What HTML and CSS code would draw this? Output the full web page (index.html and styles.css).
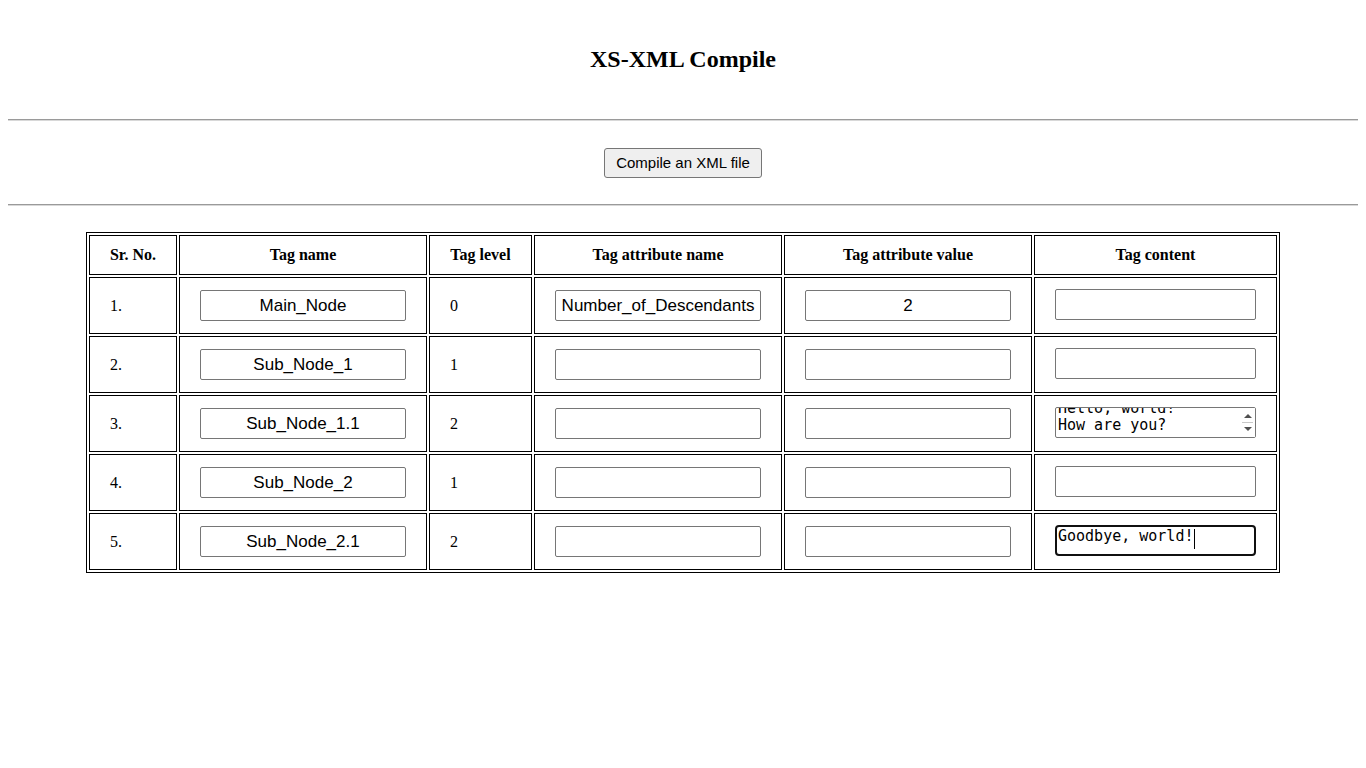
FILE: index.html
```html
<!DOCTYPE html>
<html lang="en">
<head>
<meta charset="utf-8">
<title>XS-XML Compile</title>
<link rel="stylesheet" href="styles.css">
</head>
<body>
<h2 class="title">XS-XML Compile</h2>
<hr class="rule">
<div class="actions">
  <button class="compile-btn" type="button">Compile an XML file</button>
</div>
<hr class="rule">
<table class="tags">
  <thead>
    <tr>
      <th class="c-sr">Sr. No.</th>
      <th class="c-name">Tag name</th>
      <th class="c-level">Tag level</th>
      <th class="c-attr">Tag attribute name</th>
      <th class="c-val">Tag attribute value</th>
      <th class="c-content">Tag content</th>
    </tr>
  </thead>
  <tbody>
    <tr>
      <td>1.</td>
      <td><input class="field" type="text" value="Main_Node"></td>
      <td>0</td>
      <td><input class="field" type="text" value="Number_of_Descendants"></td>
      <td><input class="field" type="text" value="2"></td>
      <td><div class="content-box"><textarea class="content"></textarea></div></td>
    </tr>
    <tr>
      <td>2.</td>
      <td><input class="field" type="text" value="Sub_Node_1"></td>
      <td>1</td>
      <td><input class="field" type="text" value=""></td>
      <td><input class="field" type="text" value=""></td>
      <td><div class="content-box"><textarea class="content"></textarea></div></td>
    </tr>
    <tr>
      <td>3.</td>
      <td><input class="field" type="text" value="Sub_Node_1.1"></td>
      <td>2</td>
      <td><input class="field" type="text" value=""></td>
      <td><input class="field" type="text" value=""></td>
      <td><div class="content-box"><textarea class="content scroll-end">Hello, world!
How are you?</textarea><span class="fake-scroll" aria-hidden="true"><span class="arrow-up"></span><span class="arrow-sep"></span><span class="arrow-down"></span></span></div></td>
    </tr>
    <tr>
      <td>4.</td>
      <td><input class="field" type="text" value="Sub_Node_2"></td>
      <td>1</td>
      <td><input class="field" type="text" value=""></td>
      <td><input class="field" type="text" value=""></td>
      <td><div class="content-box"><textarea class="content"></textarea></div></td>
    </tr>
    <tr>
      <td>5.</td>
      <td><input class="field" type="text" value="Sub_Node_2.1"></td>
      <td>2</td>
      <td><input class="field" type="text" value=""></td>
      <td><input class="field" type="text" value=""></td>
      <td><div class="content-box"><textarea class="content is-active">Goodbye, world!</textarea><span class="fake-caret" aria-hidden="true"></span></div></td>
    </tr>
  </tbody>
</table>
<script src="script.js"></script>
</body>
</html>
```
FILE: styles.css
```css
body {
  margin: 8px;
  font-family: "Liberation Serif", "Times New Roman", serif;
  font-size: 16px;
  color: #000;
  background: #fff;
}

.title {
  margin: 37px 0 46px;
  font-size: 24px;
  line-height: 28px;
  font-weight: bold;
  text-align: center;
}

.rule {
  margin: 0;
  height: 0;
  border: 0;
  border-top: 1px solid #9a9a9a;
  border-bottom: 1px solid #d8d8d8;
}

.actions {
  padding: 27px 0 26px;
  text-align: center;
  line-height: 0;
}

.compile-btn {
  height: 30px;
  padding: 0 11px;
  font-family: "Liberation Sans", Arial, sans-serif;
  font-size: 15px;
  color: #000;
  background: #efefef;
  border: 1px solid #767676;
  border-radius: 3px;
  line-height: 28px;
}

.tags {
  margin: 26px auto 0;
  width: 1194px;
  table-layout: fixed;
  border-collapse: separate;
  border-spacing: 2px;
  border: 1px solid #000;
}

.tags th,
.tags td {
  box-sizing: border-box;
  border: 1px solid #000;
  padding: 0 20px;
  vertical-align: middle;
}

.tags th {
  height: 40px;
  line-height: 18px;
  font-weight: bold;
  text-align: center;
  white-space: nowrap;
}

.tags th.c-sr {
  padding: 0;
}

.tags td {
  height: 57px;
  text-align: left;
}

.c-sr { width: 88px; }
.c-name { width: 248px; }
.c-level { width: 103px; }
.c-attr { width: 248px; }
.c-val { width: 248px; }
.c-content { width: 243px; }

.field {
  display: block;
  box-sizing: border-box;
  width: 100%;
  height: 31px;
  margin: 0;
  padding: 1px 2px;
  font-family: "Liberation Sans", Arial, sans-serif;
  font-size: 17px;
  color: #000;
  text-align: center;
  background: #fff;
  border: 1px solid #767676;
  border-radius: 2px;
}

.content-box {
  position: relative;
  width: 201px;
  margin: 0 0 3px;
}

.content {
  display: block;
  box-sizing: border-box;
  width: 201px;
  height: 31px;
  margin: 0;
  padding: 2px;
  font-family: "DejaVu Sans Mono", monospace;
  font-size: 15px;
  line-height: 17.5px;
  color: #000;
  background: #fff;
  border: 1px solid #767676;
  border-radius: 2px;
  resize: none;
  overflow: hidden;
}

.content.is-active,
.content:focus {
  border: 2px solid #101010;
  border-radius: 4px;
  padding: 1px;
  outline: none;
}

.fake-scroll {
  position: absolute;
  top: 1px;
  right: 1px;
  bottom: 1px;
  width: 15px;
  background: #fff;
  display: flex;
  flex-direction: column;
  align-items: center;
  justify-content: center;
  gap: 4px;
}

.arrow-up,
.arrow-down {
  width: 0;
  height: 0;
  border-left: 4px solid transparent;
  border-right: 4px solid transparent;
}

.arrow-up { border-bottom: 4px solid #505050; }
.arrow-down { border-top: 4px solid #505050; }

.arrow-sep {
  width: 11px;
  height: 1px;
  background: #c8c8c8;
}

.fake-caret {
  position: absolute;
  left: 139px;
  top: 4px;
  width: 1px;
  height: 20px;
  background: #000;
}
```
FILE: script.js
```js
document.querySelectorAll('.scroll-end').forEach(function (t) {
  t.scrollTop = t.scrollHeight;
});
```
